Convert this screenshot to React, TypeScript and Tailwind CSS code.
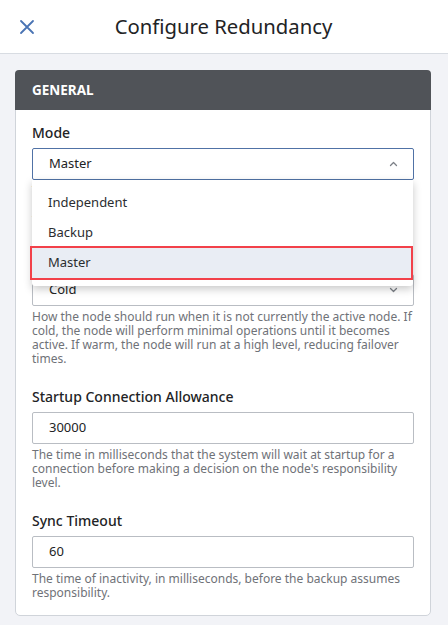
import { useState } from 'react'

function CloseIcon() {
  return (
    <svg width="16" height="16" viewBox="0 0 16 16" fill="none" stroke="#4a74b4" strokeWidth="1.8" strokeLinecap="round">
      <path d="M2 2L14 14M14 2L2 14" />
    </svg>
  )
}

function Chevron({ up }: { up?: boolean }) {
  return (
    <svg width="9" height="6" viewBox="0 0 9 6" fill="none" stroke="#7c8087" strokeWidth="1.3" strokeLinecap="round" strokeLinejoin="round">
      {up ? <path d="M1.5 4.5L4.5 1.5L7.5 4.5" /> : <path d="M1.5 1.5L4.5 4.5L7.5 1.5" />}
    </svg>
  )
}

function Help({ children }: { children: React.ReactNode }) {
  return <p className="mt-1 text-[12px] leading-[14px] text-[#6f7278]">{children}</p>
}

function Label({ children }: { children: React.ReactNode }) {
  return <div className="text-[14px] leading-5 font-medium text-[#222325] mb-[5px]">{children}</div>
}

function TextField({ label, value, help }: { label: string; value: string; help: string }) {
  return (
    <div>
      <Label>{label}</Label>
      <div className="h-8 border border-[#b9bdc3] rounded-[2px] bg-white flex items-center px-4 text-[13px] text-[#222325]">
        {value}
      </div>
      <Help>{help}</Help>
    </div>
  )
}

const modes = ['Independent', 'Backup', 'Master']

export default function App() {
  const [mode, setMode] = useState('Master')

  return (
    <div className="w-[448px] h-[625px] bg-[#f2f3f7] overflow-hidden" style={{ fontFamily: '"Noto Sans", "Open Sans", sans-serif' }}>
      <header className="h-[54px] bg-white border-b border-[#d8dce2] flex items-center relative">
        <button className="absolute left-[19px] top-[19px]">
          <CloseIcon />
        </button>
        <h1 className="w-full text-center text-[20.3px] text-[#222325] leading-none pr-px">Configure Redundancy</h1>
      </header>

      <div className="pl-[15px] pt-4">
        <div className="w-[416px] rounded-[5px] border border-[#d0d4da] bg-white">
          <div className="h-10 bg-[#505358] rounded-t-[4px] -mx-px -mt-px flex items-center px-[17px]">
            <span className="text-[13.5px] font-bold text-white">GENERAL</span>
          </div>

          <div className="px-4 pt-[13px] pb-[15px] flex flex-col gap-[21px]">
            <div className="relative mb-[2px]">
              <Label>Mode</Label>
              <div className="relative">
                <div className="h-8 border border-[#5072a6] rounded-[2px] bg-white flex items-center justify-between pl-4 pr-[15px] text-[13px] text-[#222325]">
                  <span>{mode}</span>
                  <Chevron up />
                </div>
                <div className="absolute z-10 left-0 right-[1px] top-[32px] bg-white py-2 shadow-[0_3px_8px_rgba(0,0,0,0.22)] rounded-b-[3px]">
                  {modes.map((m) => (
                    <div
                      key={m}
                      onClick={() => setMode(m)}
                      className={`relative h-[30px] flex items-center px-4 text-[13px] text-[#2b2d30] ${m === mode ? 'bg-[#e9edf4]' : ''}`}
                    >
                      {m}
                      {m === 'Master' && (
                        <div className="absolute -left-[2px] right-0 -top-[2px] -bottom-[2px] border-2 border-[#f2414a]" />
                      )}
                    </div>
                  ))}
                </div>
              </div>
              <Help>
                The redundancy role of this node. Independent nodes do not take part in redundancy, the master is
                the primary node and the backup takes over if it fails.
              </Help>
            </div>

            <div>
              <Label>Standby Activity Level</Label>
              <div className="h-8 border border-[#b9bdc3] rounded-[2px] bg-white flex items-center justify-between pl-4 pr-[15px] text-[13px] text-[#222325]">
                <span>Cold</span>
                <Chevron />
              </div>
              <Help>
                How the node should run when it is not currently the active node. If cold, the node will perform
                minimal operations until it becomes active. If warm, the node will run at a high level, reducing
                failover times.
              </Help>
            </div>

            <TextField
              label="Startup Connection Allowance"
              value="30000"
              help="The time in milliseconds that the system will wait at startup for a connection before making a decision on the node's responsibility level."
            />

            <TextField
              label="Sync Timeout"
              value="60"
              help="The time of inactivity, in milliseconds, before the backup assumes responsibility."
            />
          </div>
        </div>
      </div>
    </div>
  )
}
